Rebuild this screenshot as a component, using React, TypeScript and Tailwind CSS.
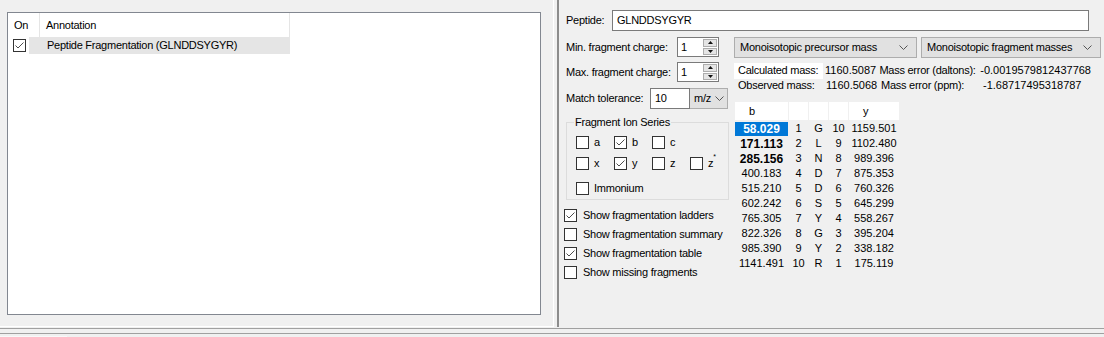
import React from "react"

const bRows = [
  { b: "58.029", n: "1", aa: "G", m: "10", y: "1159.501" },
  { b: "171.113", n: "2", aa: "L", m: "9", y: "1102.480" },
  { b: "285.156", n: "3", aa: "N", m: "8", y: "989.396" },
  { b: "400.183", n: "4", aa: "D", m: "7", y: "875.353" },
  { b: "515.210", n: "5", aa: "D", m: "6", y: "760.326" },
  { b: "602.242", n: "6", aa: "S", m: "5", y: "645.299" },
  { b: "765.305", n: "7", aa: "Y", m: "4", y: "558.267" },
  { b: "822.326", n: "8", aa: "G", m: "3", y: "395.204" },
  { b: "985.390", n: "9", aa: "Y", m: "2", y: "338.182" },
  { b: "1141.491", n: "10", aa: "R", m: "1", y: "175.119" },
]

function Check({ checked }: { checked?: boolean }) {
  return (
    <span className="w-[13px] h-[13px] shrink-0 border border-[#333333] bg-white flex items-center justify-center">
      {checked && (
        <svg width="11" height="11" viewBox="0 0 11 11">
          <polyline points="1.5,5.5 4,8 9.5,2.5" fill="none" stroke="#4d4d4d" strokeWidth="1" />
        </svg>
      )}
    </span>
  )
}

function Chevron() {
  return (
    <svg width="9" height="5" viewBox="0 0 9 5" className="shrink-0">
      <polyline points="0.5,0.5 4.5,4.5 8.5,0.5" fill="none" stroke="#555" strokeWidth="1" />
    </svg>
  )
}

function Spin({ value }: { value: string }) {
  return (
    <div className="w-[42px] h-[20px] border border-[#7a7a7a] bg-white flex">
      <div className="flex-1 pl-[3px] flex items-center text-black">{value}</div>
      <div className="w-[15px] flex flex-col gap-[1px] p-[1px] pl-0">
        <div className="flex-1 bg-[#e5e5e5] border border-[#adadad] flex items-center justify-center">
          <svg width="5" height="3" viewBox="0 0 5 3"><polygon points="0,3 5,3 2.5,0" fill="#111" /></svg>
        </div>
        <div className="flex-1 bg-[#e5e5e5] border border-[#adadad] flex items-center justify-center">
          <svg width="5" height="3" viewBox="0 0 5 3"><polygon points="0,0 5,0 2.5,3" fill="#111" /></svg>
        </div>
      </div>
    </div>
  )
}

function Dropdown({ label, className }: { label: string; className: string }) {
  return (
    <div className={`h-[21px] bg-[#e1e1e1] border border-[#adadad] flex items-center justify-between pl-[5px] pr-[8px] overflow-hidden ${className}`}>
      <span className="whitespace-nowrap">{label}</span>
      <Chevron />
    </div>
  )
}

function IonCheck({ label, checked }: { label: React.ReactNode; checked?: boolean }) {
  return (
    <div className="w-[38px] flex items-center gap-[5px]">
      <Check checked={checked} />
      <span>{label}</span>
    </div>
  )
}

export default function App() {
  return (
    <div className="w-[1104px] h-[337px] bg-[#f0f0f0] overflow-hidden font-['Liberation_Sans',Arial,sans-serif] text-[11px] text-black leading-none tracking-[-0.25px]">
      <div className="h-[327px] flex">
        {/* left: annotation list */}
        <div className="w-[554px] shrink-0 border-r border-b border-white pl-[7px] pt-[12px]">
          <div className="w-[534px] h-[303px] border border-[#828790] bg-white">
            <div className="h-[24px] flex">
              <div className="w-[32px] border-r border-[#e5e5e5] pl-[6px] flex items-center">On</div>
              <div className="w-[250px] border-r border-[#e5e5e5] pl-[6px] flex items-center">Annotation</div>
            </div>
            <div className="h-[17px] flex items-center">
              <div className="w-[21px] pl-[5px] flex items-center">
                <Check checked />
              </div>
              <div className="w-[261px] h-full bg-[#e5e5e5] pl-[18px] flex items-center whitespace-nowrap">
                Peptide Fragmentation (GLNDDSYGYR)
              </div>
            </div>
          </div>
        </div>

        {/* right: fragmentation settings */}
        <div className="flex-1 ml-[3px] border-l-2 border-[#8c8c8c] pl-[7px] pt-[10px]">
          <div className="h-[21px] flex items-center">
            <span className="w-[46px]">Peptide:</span>
            <div className="w-[477px] h-[21px] border border-[#7a7a7a] bg-white pl-[4px] flex items-center">GLNDDSYGYR</div>
          </div>

          <div className="mt-[6px] flex">
            {/* settings column */}
            <div className="w-[163px] shrink-0">
              <div className="h-[20px] flex items-center">
                <span className="w-[111px]">Min. fragment charge:</span>
                <Spin value="1" />
              </div>
              <div className="mt-[5px] h-[20px] flex items-center">
                <span className="w-[111px]">Max. fragment charge:</span>
                <Spin value="1" />
              </div>
              <div className="mt-[6px] h-[21px] flex items-center">
                <span className="w-[84px]">Match tolerance:</span>
                <div className="w-[40px] h-[21px] border border-[#7a7a7a] bg-white pl-[4px] flex items-center">10</div>
                <div className="w-[38px] h-[21px] bg-[#e1e1e1] border border-[#adadad] border-l-0 flex items-center justify-between pl-[4px] pr-[3px] overflow-hidden">
                  <span className="whitespace-nowrap">m/z</span>
                  <Chevron />
                </div>
              </div>

              <div className="relative mt-[13px] w-[163px] h-[78px] border border-[#dcdcdc] pt-[13px] pl-[9px]">
                <span className="absolute -top-[6px] left-[7px] bg-[#f0f0f0] px-[1px]">Fragment Ion Series</span>
                <div className="h-[13px] flex">
                  <IonCheck label="a" />
                  <IonCheck label="b" checked />
                  <IonCheck label="c" />
                </div>
                <div className="mt-[8px] h-[13px] flex">
                  <IonCheck label="x" />
                  <IonCheck label="y" checked />
                  <IonCheck label="z" />
                  <IonCheck label={<span>z<sup className="text-[7px] align-top relative -top-[1px]">*</sup></span>} />
                </div>
                <div className="mt-[12px] h-[13px] flex items-center gap-[5px]">
                  <Check />
                  <span>Immonium</span>
                </div>
              </div>

              <div className="mt-[9px] -ml-[2px] flex flex-col gap-[6px]">
                {[
                  ["Show fragmentation ladders", true],
                  ["Show fragmentation summary", false],
                  ["Show fragmentation table", true],
                  ["Show missing fragments", false],
                ].map(([label, checked]) => (
                  <div key={label as string} className="h-[13px] flex items-center gap-[6px] whitespace-nowrap">
                    <Check checked={checked as boolean} />
                    <span>{label}</span>
                  </div>
                ))}
              </div>
            </div>

            {/* results column */}
            <div className="ml-[5px] flex-1 min-w-0">
              <div className="flex gap-[4px]">
                <Dropdown label="Monoisotopic precursor mass" className="w-[183px]" />
                <Dropdown label="Monoisotopic fragment masses" className="w-[180px]" />
              </div>

              <div className="mt-[5px] w-[357px] overflow-hidden whitespace-nowrap">
                <div className="h-[15px] flex items-center">
                  <span className="w-[90px] h-[16px] bg-white pl-[4px] flex items-center">Calculated mass:</span>
                  <span className="w-[57px] pl-[2px] tracking-normal">1160.5087</span>
                  <span className="w-[102px]">Mass error (daltons):</span>
                  <span className="tracking-normal">-0.0019579812437768</span>
                </div>
                <div className="h-[15px] flex items-center">
                  <span className="w-[90px] pl-[4px]">Observed mass:</span>
                  <span className="w-[57px] pl-[2px] tracking-normal">1160.5068</span>
                  <span className="w-[102px]">Mass error (ppm):</span>
                  <span className="tracking-normal">-1.68717495318787</span>
                </div>
              </div>

              <div className="mt-[9px] ml-[1px] tracking-normal">
                <div className="grid grid-cols-[53px_19px_19px_19px_50px] gap-x-[1px] h-[18px]">
                  <div className="bg-white pl-[14px] flex items-center">b</div>
                  <div className="bg-white" />
                  <div className="bg-white" />
                  <div className="bg-white" />
                  <div className="bg-white pl-[14px] flex items-center">y</div>
                </div>
                <div className="mt-[1px]">
                  {bRows.map((r, i) => (
                    <div key={i} className="grid grid-cols-[53px_19px_19px_19px_50px] gap-x-[1px] h-[15px] items-center text-center">
                      <div
                        className={
                          i === 0
                            ? "h-[14px] bg-[#0078d7] text-white font-bold text-[12px] flex items-center justify-center"
                            : i < 3
                              ? "font-bold text-[12px]"
                              : ""
                        }
                      >
                        {r.b}
                      </div>
                      <div>{r.n}</div>
                      <div>{r.aa}</div>
                      <div>{r.m}</div>
                      <div>{r.y}</div>
                    </div>
                  ))}
                </div>
              </div>
            </div>
          </div>
        </div>
      </div>

      <div className="h-[1px]" />
      <div className="h-[1px] bg-[#a0a0a0]" />
      <div className="h-[4px]" />
      <div className="h-[1px] bg-[#a0a0a0]" />
      <div className="h-[2px]" />
      <div className="h-[1px] w-[67px] bg-[#f8f8f8]" />
    </div>
  )
}
